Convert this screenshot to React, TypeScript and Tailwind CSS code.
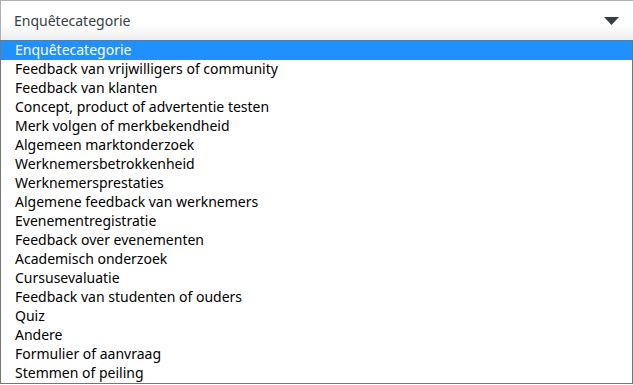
import React from "react";

const options = [
  "Enquêtecategorie",
  "Feedback van vrijwilligers of community",
  "Feedback van klanten",
  "Concept, product of advertentie testen",
  "Merk volgen of merkbekendheid",
  "Algemeen marktonderzoek",
  "Werknemersbetrokkenheid",
  "Werknemersprestaties",
  "Algemene feedback van werknemers",
  "Evenementregistratie",
  "Feedback over evenementen",
  "Academisch onderzoek",
  "Cursusevaluatie",
  "Feedback van studenten of ouders",
  "Quiz",
  "Andere",
  "Formulier of aanvraag",
  "Stemmen of peiling",
];

export default function App() {
  return (
    <div className="h-[385px] w-[633px] overflow-hidden bg-white font-['Noto_Sans',sans-serif] text-[#333e48]">
      {/* Select trigger */}
      <div className="flex h-[40px] items-center justify-between border-t border-l border-[#b0b0b0] bg-gradient-to-b from-white from-60% to-[#ededed] pl-[13px] pr-[14px]">
        <span className="text-[14px]">Enquêtecategorie</span>
        <svg width="15" height="8" viewBox="0 0 15 8">
          <polygon points="0,0 15,0 7.5,8" fill="#333e48" />
        </svg>
      </div>

      {/* Open option list */}
      <ul className="flex h-[344px] flex-col border border-[#767676] text-[14px] leading-[19px] text-black">
        {options.map((o, i) => (
          <li
            key={o}
            className={
              i === 0
                ? "h-[19px] bg-[#1e90ff] pl-[14px] text-white"
                : "h-[19px] pl-[14px]"
            }
          >
            <span className="relative -top-[1px]">{o}</span>
          </li>
        ))}
      </ul>
    </div>
  );
}
